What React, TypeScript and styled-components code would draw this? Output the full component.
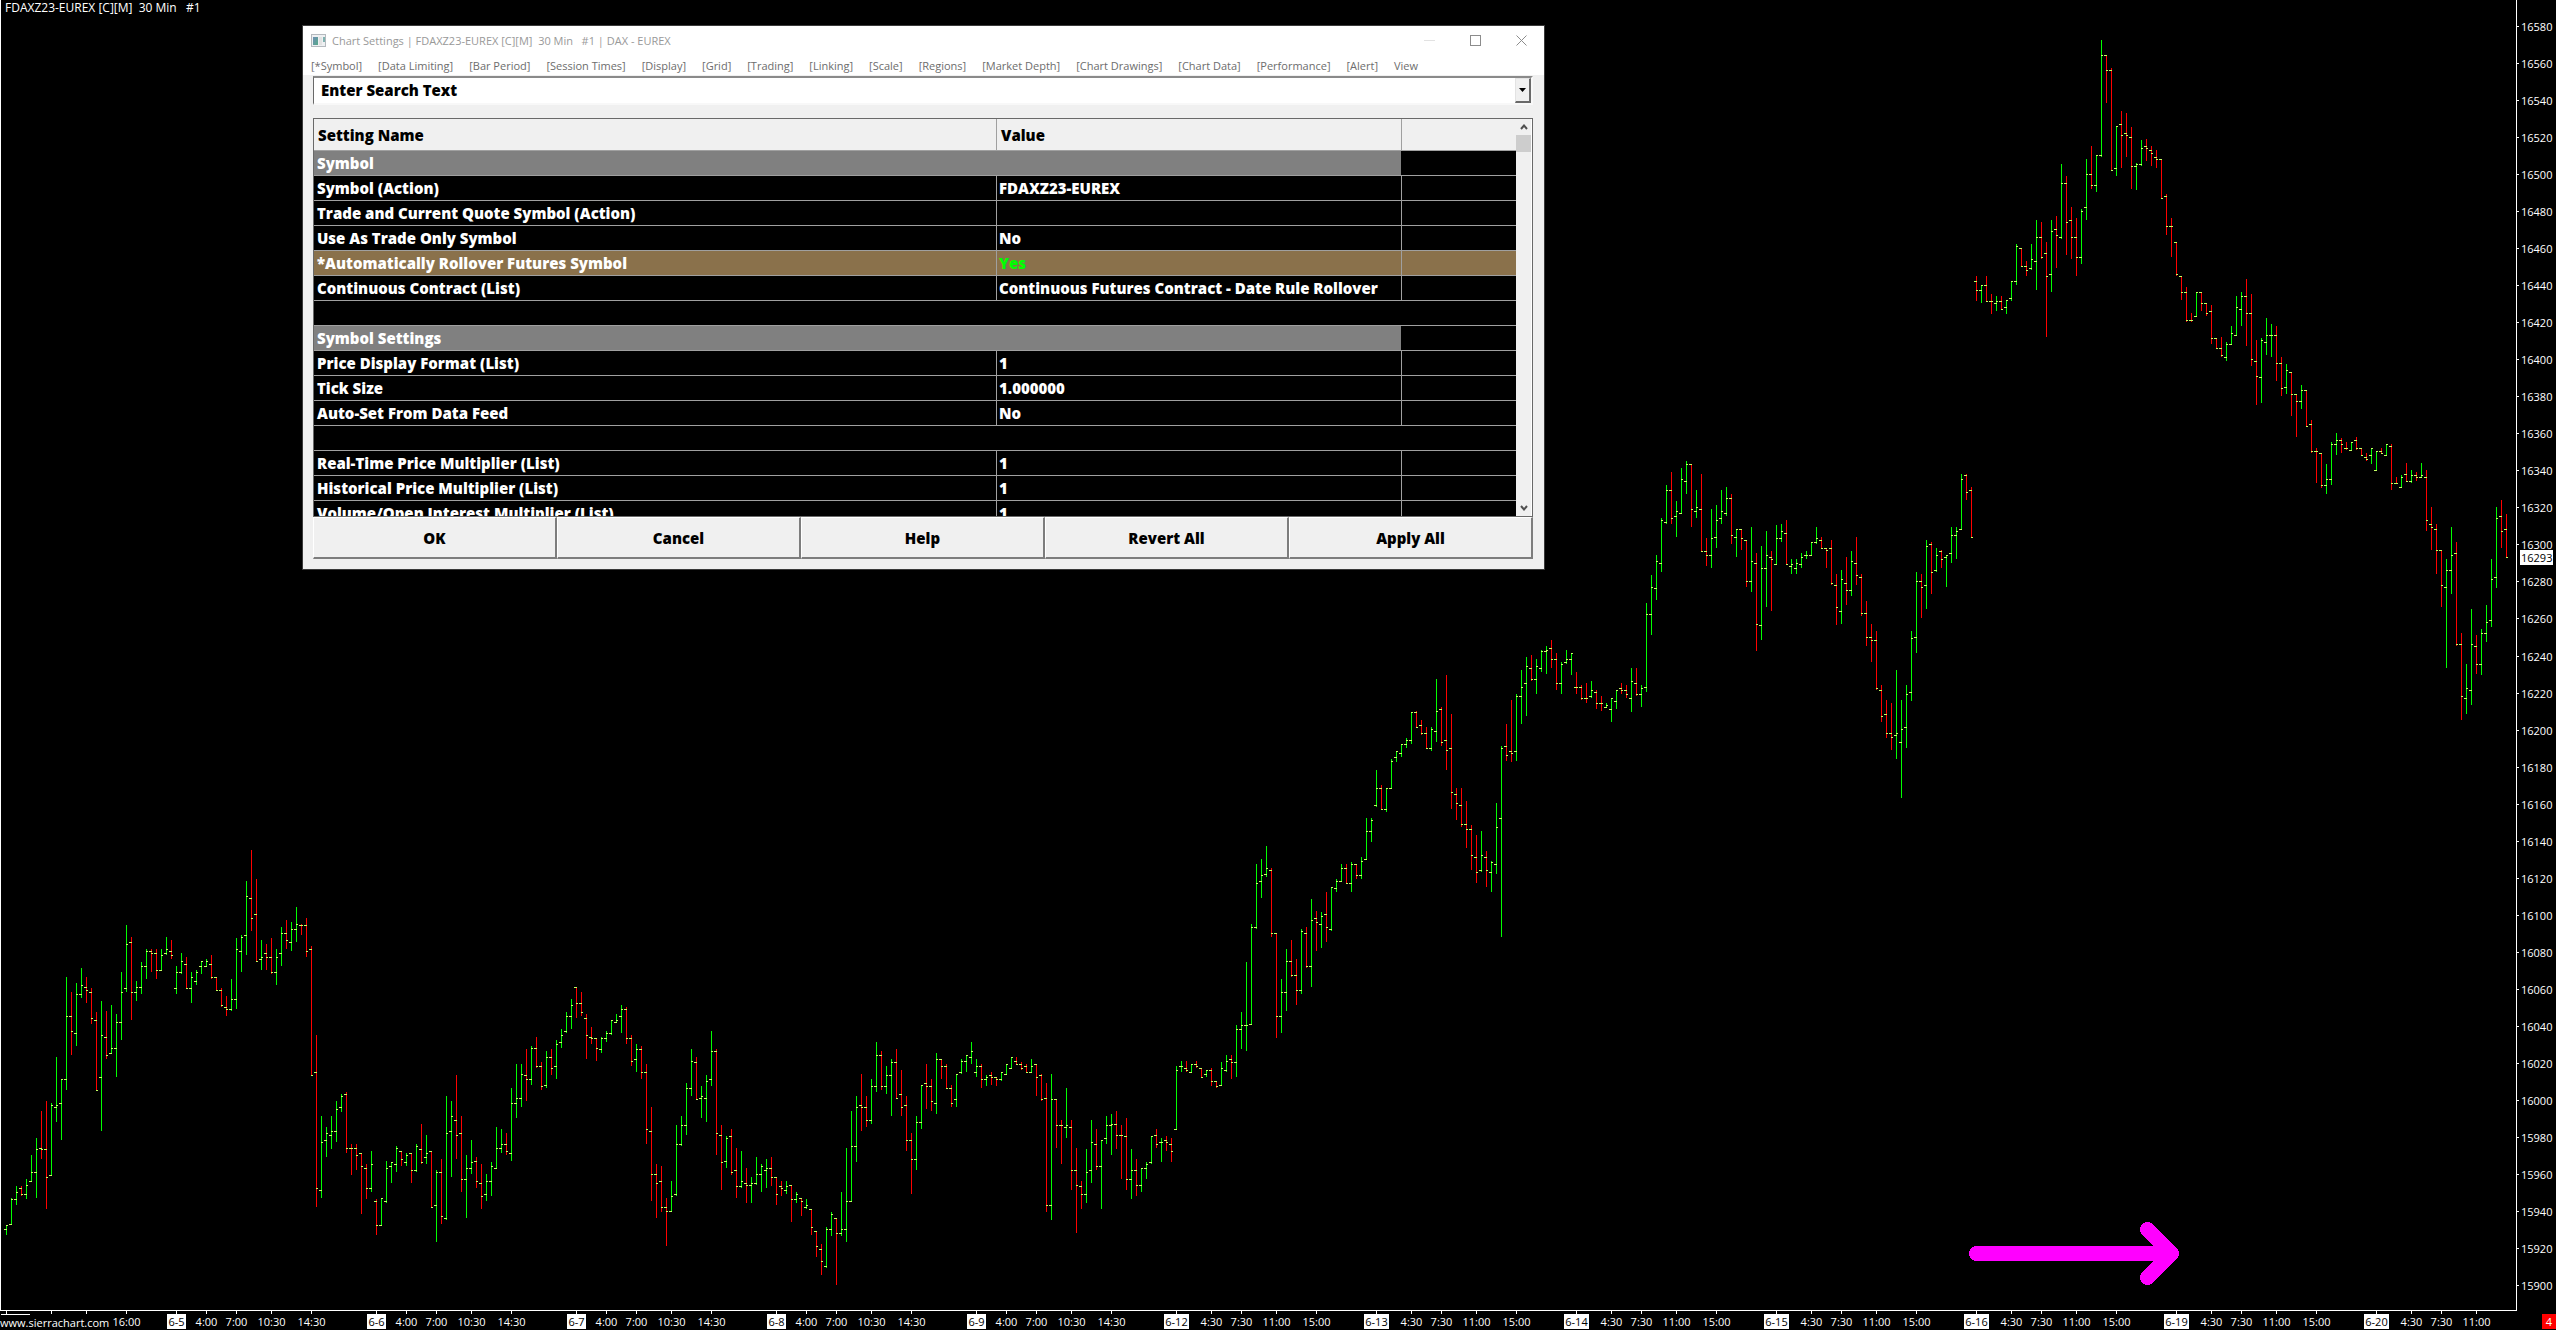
import React from 'react';
import styled, { createGlobalStyle } from 'styled-components';

const UI_FONT = '"Open Sans", "Noto Sans", sans-serif';

const GlobalStyle = createGlobalStyle`
  * { box-sizing: border-box; }
  html, body { margin: 0; background: #000; }
  body { font-family: ${UI_FONT}; font-size: 11px; color: #fff; overflow: hidden; }
  button, input { font: inherit; color: inherit; margin: 0; }
`;

/* ------------------------------------------------------------------ data */

/* Each bar is "high low open close", measured down from `top` in thirds of a pixel. */
const SEGMENTS: { top: number; bars: string }[] = [
  {
    top: 830,
    bars: `1186 1214 1198 1186,1104 1185 1183 1108,1068 1124 1108 1087,1068 1097 1075 1093,1047 1106 1093 1066,
975 1055 1054 1027,924 1103 1027 958,843 987 955 958,813 1136 958 1042,819 1037 1036 826,681 876 832 826,
747 930 820 748,441 779 748 559,486 674 559 604,459 648 610 493,414 503 493 466,441 518 472 481,474 581 487 565,
546 782 571 781,513 902 742 616,543 686 622 676,525 671 670 655,552 740 655 577,426 630 577 487,285 485 475 343,
321 569 337 487,453 513 487 472,396 491 472 409,357 446 409 364,357 425 364 370,357 446 370 421,357 422 421 376,
321 374 370 358,330 386 364 376,408 491 475 427,369 431 427 394,381 475 403 475,426 518 475 442,420 464 454 427,
393 431 409 394,387 410 409 394,375 446 403 442,441 482 442 481,474 530 481 526,498 557 532 538,447 542 538 508,
324 536 508 358,315 425 364 322,153 374 316 199,60 303 205 265,147 395 253 394,330 419 388 382,342 419 370 382,
324 431 382 427,357 464 427 382,291 407 370 310,270 356 310 331,276 362 337 298,231 335 298 283,282 314 286 287,
264 380 286 364,348 737 358 736,615 1130 727 1075,858 1103 1081 937,891 980 931 910,858 956 916 904,
813 935 904 838,792 845 832 799,786 968 793 955,942 1034 955 956,942 1019 955 976,969 1151 970 1009,
1002 1106 1015 1075,963 1085 1075 1003,1107 1214 1114 1186,1104 1187 1186 1105,993 1118 1114 1015,
996 1058 1009 997,948 1025 1003 955`,
  },
  {
    top: 950,
    bars: `603 647 604 628,609 647 637 616,609 698 610 661,582 665 661 589,522 641 598 637,555 641 622 610,
603 772 604 772,660 875 766 667,627 821 667 799,438 809 805 550,453 680 544 499,375 626 511 556,498 725 550 688,
615 803 688 655,570 671 655 637,621 713 634 694,642 776 700 739,672 752 733 694,636 737 694 649,531 656 655 595,
537 608 595 583,549 614 583 604,414 632 610 460,342 503 460 445,342 470 445 373,297 452 376 388,288 404 388 295,
261 353 295 349,336 419 349 409,303 413 406 322,297 374 322 355,270 386 349 283,237 293 277 256,186 248 244 199,
147 236 199 166,112 203 112 160,126 197 160 187,192 326 205 256,231 281 262 265,264 332 265 295,261 308 298 265,
243 275 265 250,210 254 250 211,192 218 217 211,165 248 199 178,171 281 178 265,255 347 265 334,282 365 328 298,
288 386 298 367,342 581 367 538,471 752 544 673,642 803 673 700,648 785 694 772,744 887 772 784,693 785 784 739,
525 737 733 583,498 587 583 526,399 554 526 415,297 437 415 334,321 449 337 448,408 503 445 439,375 515 445 394,
243 407 388 304,297 614 304 550,525 719 556 637,558 653 634 565,537 674 559 667,594 743 661 709,603 713 709 694,
654 758 700 706,681 758 706 700,621 704 700 673,642 725 673 649,627 713 661 655,621 707 655 682,681 764 682 733,
693 737 709 715,693 731 721 709,705 815 706 748,726 758 748 733,744 797 745 754,747 776 772 766,777 854 778 832,
843 920 844 889,882 974 898 934,831 953 949 838,786 857 838 793,804 1004 805 850,726 857 850 838,594 875 838 754,
483 755 754 589,438 635 589 472,372 542 466 472,438 530 472 511,387 521 511 409,276 425 409 316`,
  },
  {
    top: 950,
    bars: `303 419 316 409,348 431 409 376,327 497 376 337,297 445 337 445,360 497 433 472,438 602 466 571,
549 731 571 628,498 659 628 517,405 536 517 406,342 476 400 409,387 482 409 454,309 491 460 328,327 386 328 349,
342 415 349 415,405 470 415 460,372 470 448 373,327 371 367 334,315 365 334 316,276 341 322 304,327 380 367 349,
342 413 349 388,375 407 388 382,366 404 376 382,381 407 382 388,366 392 388 367,342 374 373 343,321 356 355 322,
321 344 334 343,336 359 343 355,342 368 349 367,327 368 367 349,342 437 343 382,372 452 376 448,399 785 445 766,
372 809 766 448,447 593 448 526,510 641 526 527,414 563 532 526,510 719 532 661,594 848 661 706,693 776 709 733,
597 758 733 667,510 698 661 577,537 659 583 649,570 776 649 571,498 581 565 526,492 614 526 523,483 596 523 556,
525 686 556 557,504 719 559 688,597 746 688 661,627 737 661 706,654 725 706 655,636 686 655 643,558 641 637 559,
537 593 556 583,564 635 577 576,558 602 571 577,564 635 583 604,348 539 538 361,333 365 350 349,333 365 355 361,
342 368 367 343,333 353 343 349,354 383 355 382,360 380 373 361,354 407 361 394,393 413 394 409,336 407 406 355,
315 365 361 334,315 386 328 337,225 380 337 238`,
  },
  {
    top: 620,
    bars: `1176 1286 1228 1216,1026 1292 1217 1216,912 1214 1213 922,732 926 922 790,717 833 784 766,678 770 763 745,
744 950 751 940,939 1253 940 1189,1077 1238 1189 1117,987 1172 1117 1024,960 1070 1024 1066,1017 1154 1066 1111,
927 1121 1111 934,921 1043 940 1039,837 1100 1039 901,873 992 895 907,876 983 913 889,816 965 883 922,
801 932 928 802,777 815 805 784,732 785 784 745,732 791 745 790,726 815 790 733,732 776 733 766,711 776 766 724,
594 719 718 634,594 665 634 601,450 560 556 505,495 569 505 568,504 575 568 505,417 506 505 424,393 425 412 394,
372 410 400 373,354 383 373 361,276 371 361 277,273 323 277 322,300 344 316 340,321 386 340 385,321 392 385 328,
177 365 334 274,261 377 268 367,165 449 361 391,282 566 385 517,504 599 523 550,504 620 556 613,543 683 613 628,
615 749 628 706,645 788 712 757,633 755 751 706,693 800 712 751,723 815 757 727,549 761 733 622,378 950 595 385,
312 422 379 406,240 425 394 400,222 422 394 229,150 311 229 202,111 287 190 139,105 182 145 178,117 221 178 139,
90 155 145 94,78 161 94 91,60 143 85 118,99 209 118 190,126 221 190 133,90 131 127 118,99 164 118 100,
156 221 202 203,195 239 202 235,189 248 235 236,183 233 229 211,210 266 217 250`,
  },
  {
    top: 440,
    bars: `768 812 790 791,789 803 802 796,774 845 808 775,750 806 784 751,729 761 745 751,735 773 751 763,
684 815 775 724,684 767 730 763,735 800 763 745,489 755 742 523,405 584 523 442,345 479 445 364,234 395 370 241,
135 251 247 151,96 251 151 235,183 290 229 214,84 221 220 118,63 161 124 73,72 260 73 208,150 233 214 202,
102 335 208 334,294 377 334 346,207 383 346 295,195 323 292 241,150 251 235 214,141 227 220 175,162 311 175 286,
267 350 292 268,267 329 268 295,300 440 301 424,261 455 424 364,339 632 370 553,318 599 556 385,273 500 385 346,
333 512 352 358,255 374 373 295,252 305 295 274,240 374 280 373,357 401 379 373,357 401 385 370,339 383 373 352,
333 356 346 345,306 347 346 307,261 311 307 295,291 326 301 325,324 383 325 331,300 434 325 430,402 554 436 502,
390 551 514 418,351 494 430 451,333 467 451 364,291 434 370 406,402 527 412 520,483 617 520 592,552 665 592 601,
573 749 601 745,735 845 751 829,780 893 823 880,789 929 880 892,690 956 886 880,780 1073 907 868,735 923 862 763,
573 782 757 595,396 638 592 424,402 533 424 442,300 506 436 319,306 461 313 397,324 395 391 346,330 383 334 358,
345 440 352 346,261 368 340 286,261 356 286 274,102 269 268 118,102 179 106 157,141 293 151 292`,
  },
  {
    top: 20,
    bars: `768 842 784 811,795 848 811 796,768 845 796 844,822 881 844 845,828 872 850 844,828 869 844 868,
840 881 862 841,783 842 835 784,672 794 784 679,684 740 685 739,723 767 739 751,672 749 745 718,600 809 724 652,
606 716 652 712,666 950 700 769,600 815 763 634,588 743 628 646,432 656 652 490,468 704 490 607,561 716 601 652,
594 767 652 712,567 731 712 574,417 599 562 463,378 506 463 496,405 515 496 406,60 410 406 106,105 248 106 151,
144 452 151 451,318 467 445 319,273 443 313 346,279 410 340 346,321 506 352 439,429 509 439 433,360 437 433 385,
357 422 379 385,378 437 391 400,390 443 412 418,417 536 418 535,522 644 529 619,594 710 619 620,666 767 667 763,
768 839 769 817,801 905 817 901,879 905 901 902,816 890 889 817,816 872 817 850`,
  },
  {
    top: 260,
    bars: `130 167 130 160,135 251 154 235,234 265 235 265,231 290 265 286,246 302 292 253,198 254 253 220,
108 227 226 142,96 197 148 109,57 257 109 160,102 317 160 298,240 434 304 349,234 428 352 241,174 284 247 226,
192 290 227 226,198 362 226 310,291 407 310 385,312 401 382 331,336 467 337 403,402 530 403 424,375 446 424 391,
390 500 391 499,480 578 493 574,564 668 574 575,579 683 580 676,612 701 676 658,546 674 658 553,519 584 553 541,
534 578 541 553,546 569 565 566,546 572 571 547,531 569 541 565,564 587 565 586,579 602 592 598,564 611 586 565,
573 632 631 574,564 581 574 580,552 587 586 553,552 689 559 670,651 671 670 671,645 683 682 652,609 665 643 664,
630 668 664 646,636 662 646 652,609 653 652 646,630 812 652 781,741 869 793 802,792 941 808 871,870 1040 871 976,
897 1223 982 931,801 1001 931 886,846 1157 880 1153,1119 1379 1153 1309,1212 1361 1315 1285,1047 1334 1291 1153,
1125 1241 1159 1213,1107 1244 1213 1120,1035 1145 1120 1087,897 1100 1081 958,741 983 952 775,720 863 769 814,
762 893 808 892`,
  },
];

const BAR_PITCH = 5;
const FIRST_BAR_X = 6;

const BARS = SEGMENTS.flatMap(({ top, bars }) =>
  bars.split(',').map((bar) => {
    const [high, low, open, close] = bar.trim().split(' ').map(Number);
    return {
      up: close < open,
      high: top + Math.round(high / 3),
      low: top + Math.round(low / 3),
      open: top + Math.floor(open / 3),
      close: top + Math.floor(close / 3),
    };
  }),
);

type TimeLabel = { x: number; text?: string; day?: boolean };

const earlyDay = (x: number, day: string): TimeLabel[] => [
  { x, text: day, day: true },
  { x: x + 30, text: '4:00' },
  { x: x + 60, text: '7:00' },
  { x: x + 95, text: '10:30' },
  { x: x + 135, text: '14:30' },
];

const lateDay = (x: number, day: string): TimeLabel[] => [
  { x, text: day, day: true },
  { x: x + 35, text: '4:30' },
  { x: x + 65, text: '7:30' },
  { x: x + 100, text: '11:00' },
  { x: x + 140, text: '15:00' },
];

const TIME_LABELS: TimeLabel[] = [
  { x: 6 },
  { x: 51 },
  { x: 86 },
  { x: 126, text: '16:00' },
  ...earlyDay(176, '6-5'),
  ...earlyDay(376, '6-6'),
  ...earlyDay(576, '6-7'),
  ...earlyDay(776, '6-8'),
  ...earlyDay(976, '6-9'),
  ...lateDay(1176, '6-12'),
  ...lateDay(1376, '6-13'),
  ...lateDay(1576, '6-14'),
  ...lateDay(1776, '6-15'),
  ...lateDay(1976, '6-16'),
  ...lateDay(2176, '6-19'),
  ...lateDay(2376, '6-20').slice(0, 4),
];

const TOP_PRICE = 16580;
const LAST_PRICE = 16293;
const priceToY = (price: number) => Math.round(26 + ((TOP_PRICE - price) * 1259) / 680);
const PRICES = Array.from({ length: 35 }, (_, i) => TOP_PRICE - i * 20);

const MENU = [
  '[*Symbol]', '[Data Limiting]', '[Bar Period]', '[Session Times]', '[Display]', '[Grid]',
  '[Trading]', '[Linking]', '[Scale]', '[Regions]', '[Market Depth]', '[Chart Drawings]',
  '[Chart Data]', '[Performance]', '[Alert]', 'View',
];

type Setting = { kind: 'section' | 'blank' | 'item' | 'changed'; name?: string; value?: string };

const SETTINGS: Setting[] = [
  { kind: 'section', name: 'Symbol' },
  { kind: 'item', name: 'Symbol (Action)', value: 'FDAXZ23-EUREX' },
  { kind: 'item', name: 'Trade and Current Quote Symbol (Action)' },
  { kind: 'item', name: 'Use As Trade Only Symbol', value: 'No' },
  { kind: 'changed', name: '*Automatically Rollover Futures Symbol', value: 'Yes' },
  { kind: 'item', name: 'Continuous Contract (List)', value: 'Continuous Futures Contract - Date Rule Rollover' },
  { kind: 'blank' },
  { kind: 'section', name: 'Symbol Settings' },
  { kind: 'item', name: 'Price Display Format (List)', value: '1' },
  { kind: 'item', name: 'Tick Size', value: '1.000000' },
  { kind: 'item', name: 'Auto-Set From Data Feed', value: 'No' },
  { kind: 'blank' },
  { kind: 'item', name: 'Real-Time Price Multiplier (List)', value: '1' },
  { kind: 'item', name: 'Historical Price Multiplier (List)', value: '1' },
  { kind: 'item', name: 'Volume/Open Interest Multiplier (List)', value: '1' },
];

const ACTIONS = ['OK', 'Cancel', 'Help', 'Revert All', 'Apply All'];

/* ----------------------------------------------------------------- chart */

const Screen = styled.main`
  position: relative;
  display: grid;
  grid-template-columns: minmax(0, 1fr) 39px;
  grid-template-rows: minmax(0, 1fr) 19px;
  height: 100vh;
  background: #000;
`;

const Plot = styled.section`
  position: relative;
  border: solid #fff;
  border-width: 0 1px 1px;
`;

const Drawing = styled.svg`
  display: block;
  width: 100%;
  height: 100%;
  overflow: hidden;
  shape-rendering: crispEdges;
  font-size: 11px;
`;

const PlotTitle = styled.h1`
  position: absolute;
  top: 0;
  left: 4px;
  margin: 0;
  font-size: 12px;
  font-weight: 400;
  line-height: 16px;
  white-space: pre;
`;

const PriceAxis = styled.aside`
  min-width: 0;
`;

const TimeAxis = styled.footer`
  position: relative;
`;

const SiteLink = styled.a`
  position: absolute;
  left: 0;
  bottom: 0;
  color: #fff;
  line-height: 15px;
  text-decoration: none;
`;

const Corner = styled.div`
  display: flex;
  align-items: flex-end;
  justify-content: flex-end;
  padding-bottom: 1px;
`;

const AlertCount = styled.span`
  width: 14px;
  background: #f00;
  line-height: 15px;
  text-align: center;
`;

function PriceBars() {
  return (
    <Drawing aria-label="30 minute price bars">
      <g transform="translate(-1 0)">
        {BARS.map((bar, i) => {
          const x = FIRST_BAR_X + i * BAR_PITCH;
          return (
            <g key={i}>
              <rect x={x} y={bar.high} width={1} height={bar.low - bar.high} fill={bar.up ? '#00ff00' : '#ff0000'} />
              <rect x={x - 2} y={bar.open} width={3} height={1} fill="#c4ff62" />
              <rect x={x} y={bar.close} width={2} height={1} fill="#c4ff62" />
            </g>
          );
        })}
        <path
          d="M1976.5 1253.5H2171.5M2147.5 1229.5L2171.5 1253.5L2147.5 1277.5"
          fill="none"
          stroke="#ff00ff"
          strokeWidth={15}
          strokeLinecap="round"
          strokeLinejoin="round"
        />
      </g>
    </Drawing>
  );
}

function PriceScale() {
  return (
    <PriceAxis>
      <Drawing aria-label="Price scale">
        {PRICES.map((price) => {
          const y = priceToY(price);
          return (
            <g key={price} fill="#fff">
              <rect x={0} y={y} width={2} height={1} />
              <text x={4} y={y + 5}>{price}</text>
            </g>
          );
        })}
        <rect x={3} y={550} width={33} height={15} fill="#fff" />
        <text x={4} y={562}>{LAST_PRICE}</text>
      </Drawing>
    </PriceAxis>
  );
}

function TimeScale() {
  return (
    <TimeAxis>
      <Drawing aria-label="Time scale">
        <rect x={1} y={3} width={29} height={1} fill="#fff" />
        {TIME_LABELS.map(({ x, text, day }) => {
          const width = text && text.length > 3 ? 25 : 19;
          return (
            <g key={x} fill="#fff">
              <rect x={x} y={0} width={1} height={3} />
              {day && <rect x={x - (width - 1) / 2} y={3} width={width} height={15} />}
              {text && (
                <text x={x + 0.5} y={15} textAnchor="middle" fill={day ? '#000' : '#fff'}>{text}</text>
              )}
            </g>
          );
        })}
      </Drawing>
      <SiteLink href="#">www.sierrachart.com</SiteLink>
    </TimeAxis>
  );
}

/* ---------------------------------------------------------------- dialog */

const Dialog = styled.section`
  position: absolute;
  top: 25px;
  left: 302px;
  width: 1243px;
  padding-bottom: 10px;
  border: 1px solid #3a3a3a;
  background: #f0f0f0;
  color: #000;
`;

const TitleBar = styled.header`
  display: flex;
  align-items: center;
  height: 29px;
  padding-left: 8px;
  background: #fff;
  color: #999;
`;

const DialogTitle = styled.h2`
  flex: 1;
  margin: 0 0 0 6px;
  font-size: 11px;
  font-weight: 400;
  white-space: pre;
`;

const CaptionButton = styled.button`
  display: grid;
  place-items: center;
  width: 46px;
  height: 29px;
  padding: 0;
  border: 0;
  background: none;
`;

const MenuBar = styled.nav`
  display: flex;
  height: 20px;
  background: #fff;
  color: #6d6d6d;
`;

const MenuButton = styled.button`
  padding: 0 8px;
  border: 0;
  background: none;
  font-size: 11px;
  line-height: 22px;
  white-space: nowrap;
`;

const Body = styled.div`
  padding: 1px 11px 0 10px;
  font-size: 15px;
  font-weight: 800;
`;

const SearchBox = styled.div`
  display: flex;
  height: 29px;
  border: solid;
  border-width: 2px 2px 2px 1px;
  border-color: #8a8a8a #f8f8f8 #f8f8f8 #696969;
  background: #fff;
`;

const SearchInput = styled.input`
  flex: 1;
  min-width: 0;
  padding: 0 7px 1px;
  border: 0;
  outline: 0;
  background: #fff;
`;

const DropButton = styled.button`
  display: grid;
  place-items: center;
  width: 16px;
  padding: 0;
  border: solid;
  border-width: 1px 2px 2px 1px;
  border-color: #e3e3e3 #696969 #696969 #e3e3e3;
  background: #f0f0f0;
`;

const ListFrame = styled.div`
  display: flex;
  height: 399px;
  margin-top: 13px;
  border: 1px solid #696969;
  overflow: hidden;
`;

const SettingsTable = styled.table`
  flex: 1;
  align-self: flex-start;
  border-collapse: separate;
  border-spacing: 0;
  table-layout: fixed;
  background: #000;
  color: #fff;
  line-height: 20px;
  text-align: left;
  white-space: nowrap;
`;

const NameCol = styled.col`
  width: 682px;
`;

const ValueCol = styled.col`
  width: 405px;
`;

const HeadCell = styled.th<{ $divided?: boolean }>`
  height: 32px;
  padding: 0 0 0 4px;
  border-bottom: 1px solid #a0a0a0;
  border-left: ${({ $divided }) => ($divided ? '1px solid #a0a0a0' : '0')};
  background: #f0f0f0;
  color: #000;
  font-weight: 800;
`;

const Cell = styled.td<{ $tone?: string; $divided?: boolean; $ink?: string }>`
  height: 25px;
  padding: 0 0 0 ${({ $divided }) => ($divided ? '2px' : '3px')};
  border-bottom: 1px solid #a0a0a0;
  border-left: ${({ $divided }) => ($divided ? '1px solid #a0a0a0' : '0')};
  background: ${({ $tone = '#000' }) => $tone};
  color: ${({ $ink = '#fff' }) => $ink};
`;

const ScrollBar = styled.div`
  display: grid;
  grid-template-rows: 16px 1fr 17px;
  width: 16px;
  border-right: 1px solid #fff;
  background: #f0f0f0;
`;

const ScrollButton = styled.button`
  display: grid;
  place-items: center;
  padding: 0;
  border: 0;
  background: none;
`;

const ScrollThumb = styled.div`
  height: 17px;
  background: #cdcdcd;
`;

const Actions = styled.div`
  display: grid;
  grid-template-columns: repeat(5, 1fr);
`;

const ActionButton = styled.button`
  height: 42px;
  padding: 0;
  border: solid;
  border-width: 1px 2px 2px 1px;
  border-color: #fff #7d7d7d #7d7d7d #fff;
  background: #f0f0f0;
`;

function SettingRow({ kind, name, value }: Setting) {
  if (kind === 'blank') {
    return (
      <tr>
        <Cell colSpan={3} />
      </tr>
    );
  }
  if (kind === 'section') {
    return (
      <tr>
        <Cell colSpan={2} $tone="#808080">{name}</Cell>
        <Cell />
      </tr>
    );
  }
  const tone = kind === 'changed' ? '#8a714b' : '#000';
  return (
    <tr>
      <Cell $tone={tone}>{name}</Cell>
      <Cell $tone={tone} $divided $ink={kind === 'changed' ? '#00ff00' : '#fff'}>{value}</Cell>
      <Cell $tone={tone} $divided />
    </tr>
  );
}

function ChartSettings() {
  return (
    <Dialog role="dialog" aria-labelledby="settings-title">
      <TitleBar>
        <svg width="15" height="13" viewBox="0 0 15 13" aria-hidden="true">
          <defs>
            <linearGradient id="pane" x1="0" y1="0" x2="1" y2="1">
              <stop offset="0" stopColor="#6f8fb4" />
              <stop offset="1" stopColor="#57a98a" />
            </linearGradient>
          </defs>
          <rect x=".5" y=".5" width="14" height="12" fill="#eef0f2" stroke="#b4b9be" />
          <rect x="2" y="3" width="5" height="8" fill="url(#pane)" />
          <rect x="8" y="3" width="3" height="8" fill="#e2e2e2" />
          <rect x="12" y="3" width="2" height="5" fill="#7fb2b0" />
        </svg>
        <DialogTitle id="settings-title">{'Chart Settings | FDAXZ23-EUREX [C][M]  30 Min   #1 | DAX - EUREX'}</DialogTitle>
        <CaptionButton aria-label="Minimize">
          <svg width="11" height="11" viewBox="0 0 11 11"><path d="M0 5.5H11" stroke="#e2e2e2" /></svg>
        </CaptionButton>
        <CaptionButton aria-label="Maximize">
          <svg width="11" height="11" viewBox="0 0 11 11"><rect x=".5" y=".5" width="10" height="10" fill="none" stroke="#8c8c8c" /></svg>
        </CaptionButton>
        <CaptionButton aria-label="Close">
          <svg width="11" height="11" viewBox="0 0 11 11"><path d="M.5 .5L10.5 10.5M10.5 .5L.5 10.5" stroke="#8c8c8c" /></svg>
        </CaptionButton>
      </TitleBar>
      <MenuBar>
        {MENU.map((item) => (
          <MenuButton key={item}>{item}</MenuButton>
        ))}
      </MenuBar>
      <Body>
        <SearchBox>
          <SearchInput aria-label="Search settings" defaultValue="Enter Search Text" />
          <DropButton aria-label="Search history">
            <svg width="7" height="4" viewBox="0 0 7 4"><path d="M0 0H7L3.5 4Z" /></svg>
          </DropButton>
        </SearchBox>
        <ListFrame>
          <SettingsTable>
            <colgroup>
              <NameCol />
              <ValueCol />
              <col />
            </colgroup>
            <thead>
              <tr>
                <HeadCell>Setting Name</HeadCell>
                <HeadCell $divided>Value</HeadCell>
                <HeadCell $divided />
              </tr>
            </thead>
            <tbody>
              {SETTINGS.map((setting, i) => (
                <SettingRow key={i} {...setting} />
              ))}
            </tbody>
          </SettingsTable>
          <ScrollBar>
            <ScrollButton aria-label="Scroll up">
              <svg width="8" height="6" viewBox="0 0 8 6"><path d="M1 5L4 1.5L7 5" fill="none" stroke="#505050" strokeWidth="2" /></svg>
            </ScrollButton>
            <ScrollThumb />
            <ScrollButton aria-label="Scroll down">
              <svg width="8" height="6" viewBox="0 0 8 6"><path d="M1 1L4 4.5L7 1" fill="none" stroke="#505050" strokeWidth="2" /></svg>
            </ScrollButton>
          </ScrollBar>
        </ListFrame>
        <Actions>
          {ACTIONS.map((action) => (
            <ActionButton key={action}>{action}</ActionButton>
          ))}
        </Actions>
      </Body>
    </Dialog>
  );
}

export default function App() {
  return (
    <>
      <GlobalStyle />
      <Screen>
        <Plot>
          <PriceBars />
          <PlotTitle>{'FDAXZ23-EUREX [C][M]  30 Min   #1'}</PlotTitle>
        </Plot>
        <PriceScale />
        <TimeScale />
        <Corner>
          <AlertCount>4</AlertCount>
        </Corner>
        <ChartSettings />
      </Screen>
    </>
  );
}
